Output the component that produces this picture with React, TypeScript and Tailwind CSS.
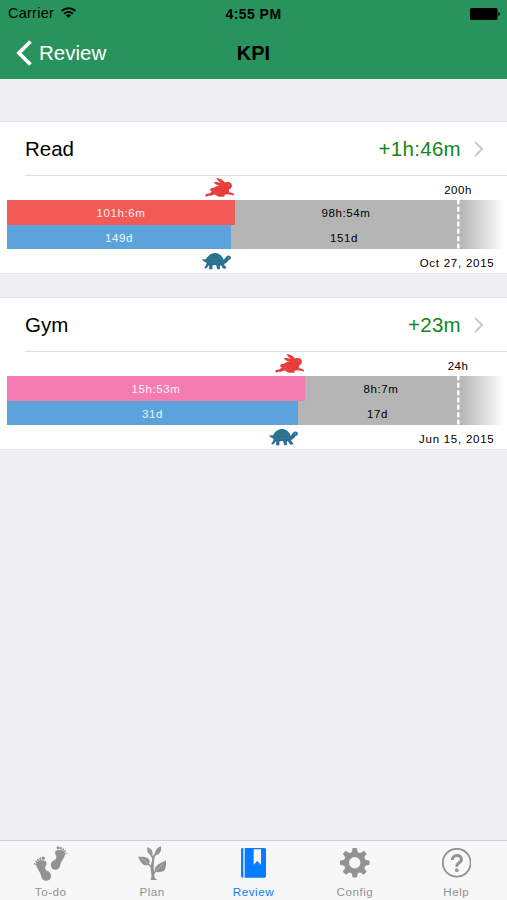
import type { ReactNode } from 'react'
import clsx from 'clsx'

type Goal = {
  name: string
  lead: string
  total: string
  due: string
  spent: { label: string; width: number; color: string }
  elapsed: { label: string; width: number }
  hoursLeft: string
  daysLeft: string
}

// Width of a chart from its left edge to the target line
const TARGET = 451

const goals: Goal[] = [
  {
    name: 'Read',
    lead: '+1h:46m',
    total: '200h',
    due: 'Oct 27, 2015',
    spent: { label: '101h:6m', width: 228, color: 'bg-[#f25a56]' },
    elapsed: { label: '149d', width: 224 },
    hoursLeft: '98h:54m',
    daysLeft: '151d',
  },
  {
    name: 'Gym',
    lead: '+23m',
    total: '24h',
    due: 'Jun 15, 2015',
    spent: { label: '15h:53m', width: 298, color: 'bg-[#f47cb0]' },
    elapsed: { label: '31d', width: 291 },
    hoursLeft: '8h:7m',
    daysLeft: '17d',
  },
]

function Rabbit() {
  return (
    <svg viewBox="0 0 88 57" className="h-[19px] w-[29.3px]" fill="#e63c3b">
      {/* ears */}
      <path d="M34 1C44 0 55 6 62 16L56 21C49 16 40 11 34 1Z" />
      <path d="M26 13C36 10 47 13 56 20L50 25C41 24 32 21 26 13Z" />
      {/* head and body */}
      <path d="M58 16C63 11 73 11 78 16C81 20 82 26 79 29C77 32 74 33 72 34C74 40 71 44 67 47C60 52 50 50 44 52C33 52 24 48 22 41C15 41 14 33 19 31C21 28 24 30 26 30C33 23 43 21 51 23Z" />
      {/* legs */}
      <path d="M23 38C20 42 15 46 9 47C5 47 1 48 1 52C1 56 5 57 9 53C17 54 23 52 31 47Z" />
      <path d="M63 42C70 43 77 43 82 45C87 47 88 50 88 52C84 53 80 50 76 50C69 50 62 49 57 48Z" />
      <path d="M35 48C43 47 50 49 57 50C61 52 60 56 55 56L43 56C38 55 34 53 32 50Z" />
      <circle cx="71" cy="21" r="1.8" fill="#fff" fillOpacity=".6" />
      <path d="M26 35C25 41 31 45 40 46" fill="none" stroke="#fff" strokeOpacity=".2" strokeWidth="1.5" />
    </svg>
  )
}

function Turtle() {
  return (
    <svg viewBox="0 0 87 50" className="h-[16.7px] w-[29px]" fill="#28718f">
      <path d="M0 20C6 18 9 19 12 19C18 7 28 0 39 0C51 0 60 8 65 20C69 18 70 12 75 9C81 6 87 9 87 15C86 20 81 20 79 22C76 29 71 32 66 33C67 36 69 39 73 43C74 48 66 48 63 46C60 42 59 38 56 37C53 38 53 40 54 45C55 50 47 50 45 47C44 43 44 39 42 37C38 36 34 36 31 38C31 42 33 46 30 49C26 50 20 49 21 44C22 40 22 38 21 37C18 39 17 44 13 46C8 47 6 45 8 42C12 38 13 34 14 30C10 27 5 25 0 20Z" />
      <path d="M14 26C29 31 49 31 64 25M30 4L28 14L38 20L51 15L48 4M28 14L19 20M51 15L60 20M38 20V28" fill="none" stroke="#fff" strokeOpacity=".13" strokeWidth="1.3" />
      <circle cx="79" cy="14" r="1.6" fill="#fff" fillOpacity=".6" />
    </svg>
  )
}

function Footprint() {
  return (
    <>
      <path d="M12 46C18 42 30 42 35 46C40 51 37 57 34 63C32 69 35 73 42 76C49 80 52 86 51 92C50 101 42 105 34 104C25 103 22 96 21 88C19 79 10 69 7 60C5 54 7 49 12 46Z" />
      <ellipse cx="28" cy="36.500" rx="5" ry="5" />
      <ellipse cx="19" cy="38.500" rx="3.2" ry="4.500" transform="rotate(-20 19 38.500)" />
      <ellipse cx="12" cy="42" rx="2.700" ry="4" transform="rotate(-30 12 42)" />
      <ellipse cx="6.500" cy="47" rx="2.300" ry="3.600" transform="rotate(-35 6.500 47)" />
      <ellipse cx="3" cy="54" rx="2" ry="3.300" transform="rotate(-35 3 54)" />
    </>
  )
}

function FeetIcon() {
  return (
    <svg viewBox="0 0 99 105" className="h-[35px] w-[33px]" fill="currentColor">
      <Footprint />
      <g transform="translate(99 -30) scale(-.95 .97)">
        <Footprint />
      </g>
    </svg>
  )
}

function PlantIcon() {
  return (
    <svg viewBox="0 0 85 104" className="h-[34.7px] w-[28.3px]" fill="currentColor">
      <path d="M37 104C41 96 41 88 39 77C37 64 40 49 46 26L51 27C48 47 46 60 48 74L49 91C50 97 54 101 62 104Z" />
      <path d="M43 67C38 61 33 56 28 51M46 85C50 77 55 73 62 68M46 38C42 31 39 27 37 23M48 31C51 27 54 23 57 19" fill="none" stroke="currentColor" strokeWidth="5" />
      <path d="M0 32C11 32 29 31 34 42C36 48 34 54 30 57C12 61 8 45 0 32Z" />
      <path d="M85 42C83 56 86 70 75 76C67 80 57 79 50 74C51 56 66 53 85 42Z" />
      <path d="M29 3C39 8 46 15 43 27C29 27 26 15 29 3Z" />
      <path d="M69 1C71 13 67 26 52 28C48 15 58 5 69 1Z" />
      <path d="M10 38C18 41 24 45 28 53M75 53C69 61 64 66 55 72" fill="none" stroke="#f7f7f7" strokeOpacity=".6" strokeWidth="2" />
      <path d="M33 10L38 22M64 8L56 22" fill="none" stroke="#f7f7f7" strokeOpacity=".35" strokeWidth="1.500" />
    </svg>
  )
}

function BookIcon() {
  return (
    <svg viewBox="0 0 75 89" className="h-[29.7px] w-[25px]" fill="currentColor">
      <path d="M4 0H7V89H4C1 88 0 86 0 83V6C0 3 1 1 4 0ZM11 0H70C73 0 75 2 75 5V84C75 87 73 89 70 89H11Z" />
      <path d="M38 4H60V50L49 39L38 50Z" fill="#f7f7f7" />
    </svg>
  )
}

const teeth = [0, 45, 90, 135, 180, 225, 270, 315]

function GearIcon() {
  return (
    <svg viewBox="-44 -44 88 88" className="size-[29.5px]" fill="currentColor">
      {teeth.map((angle) => (
        <path key={angle} d="M-13 -27L-8 -34L-7 -42Q-6 -44 -4 -44H4Q6 -44 7 -42L8 -34L13 -27Z" transform={`rotate(${angle})`} />
      ))}
      <circle r="24.500" fill="none" stroke="currentColor" strokeWidth="15" />
    </svg>
  )
}

function HelpIcon() {
  return (
    <svg viewBox="0 0 88 88" className="size-[29.5px]" fill="none" stroke="currentColor">
      <circle cx="44" cy="44" r="41.500" strokeWidth="5.500" />
      <path d="M31 36C31 18 58 18 58 34C58 44 44 43 44 56" strokeWidth="9" />
      <circle cx="44" cy="66" r="5.500" fill="currentColor" stroke="none" />
    </svg>
  )
}

function BarLabel({ children, className }: { children: ReactNode; className?: string }) {
  return (
    <div className={clsx('flex h-full shrink-0 items-center justify-center pt-[3px] text-[11.5px] tracking-[0.6px]', className)}>
      {children}
    </div>
  )
}

function GoalCard({ goal }: { goal: Goal }) {
  const { spent, elapsed } = goal

  return (
    <section className="h-[151px] bg-white shadow-[0_0_0_1px_#e4e4e8]">
      {/* Title row */}
      <div className="ml-[25px] flex h-[54px] items-center border-b border-[#dedee2] pt-[2px] pr-[24px]">
        <h2 className="text-[20.5px]">{goal.name}</h2>
        <span className="ml-auto text-[20.5px] tracking-[0.3px] text-[#128a12]">{goal.lead}</span>
        <svg viewBox="0 0 9 16" className="mb-[2px] ml-[13px] h-4 w-[9px]" fill="none" stroke="#c7c7cc" strokeWidth="2">
          <path d="M1 1L8 8L1 15" />
        </svg>
      </div>

      {/* Rabbit runs at the end of the hours bar */}
      <div className="ml-[7px] flex h-[24px] items-start pt-[2px]">
        <div className="flex shrink-0 justify-end pr-px" style={{ width: spent.width }}>
          <Rabbit />
        </div>
        <span className="mt-[4px] flex-1 text-[11.5px] leading-[16px] tracking-[0.5px]">
          <span className="block text-center" style={{ marginLeft: TARGET - spent.width - 40, width: 80 }}>
            {goal.total}
          </span>
        </span>
      </div>

      {/* Progress bars */}
      <div className="ml-[7px] flex h-[49px]">
        <div className="shrink-0 bg-[#b5b5b5]" style={{ width: TARGET - 1 }}>
          <div className="flex h-[24.5px]">
            <div className={clsx('text-white/90', spent.color)} style={{ width: spent.width }}>
              <BarLabel>{spent.label}</BarLabel>
            </div>
            <BarLabel className="flex-1">{goal.hoursLeft}</BarLabel>
          </div>
          <div className="flex h-[24.5px]">
            <div className="bg-[#5ba3da] text-white/90" style={{ width: elapsed.width }}>
              <BarLabel>{elapsed.label}</BarLabel>
            </div>
            <BarLabel className="flex-1">{goal.daysLeft}</BarLabel>
          </div>
        </div>
        <svg viewBox="0 0 3 49" className="h-[49px] w-[3px] shrink-0 bg-[#b5b5b5]">
          <path d="M1.300 0V49" stroke="#fff" strokeWidth="2.500" strokeDasharray="5 2.330" strokeDashoffset="0.500" />
        </svg>
        <div className="flex-1 bg-linear-to-r from-[#b5b5b5] to-white to-95%" />
      </div>

      {/* Turtle walks at the end of the days bar */}
      <div className="ml-[7px] flex items-start pt-[4px] pr-[12.5px]">
        <div className="flex shrink-0 justify-end" style={{ width: elapsed.width }}>
          <Turtle />
        </div>
        <span className="mt-[2px] ml-auto text-[11.5px] leading-[16px] tracking-[0.75px]">{goal.due}</span>
      </div>
    </section>
  )
}

const tabs = [
  { label: 'To-do', icon: <FeetIcon /> },
  { label: 'Plan', icon: <PlantIcon /> },
  { label: 'Review', icon: <BookIcon />, active: true },
  { label: 'Config', icon: <GearIcon /> },
  { label: 'Help', icon: <HelpIcon /> },
]

export default function App() {
  return (
    <div className="flex h-[900px] w-[507px] flex-col overflow-hidden bg-[#efeff4] font-['Liberation_Sans',Arial,sans-serif] text-black">
      <header className="h-[79px] shrink-0 bg-[#28935d]">
        {/* Status bar */}
        <div className="grid h-[27px] grid-cols-3 items-center px-[8px] text-[14.5px]">
          <div className="flex items-center gap-[7px]">
            <span className="mt-px tracking-[0.25px]">Carrier</span>
            <svg viewBox="0 0 15 11" className="mb-[3px] h-[11px] w-[15px]" fill="none" stroke="#000" strokeWidth="2">
              <path d="M.7 4C4.500 .3 10.500 .3 14.300 4M3.200 6.700C5.700 4.300 9.300 4.300 11.800 6.700" />
              <path d="M4.900 8.400Q7.500 6.300 10.100 8.400L7.500 11Z" fill="#000" stroke="none" />
            </svg>
          </div>
          <span className="mt-px text-center text-[14px] font-bold tracking-[0.45px]">4:55 PM</span>
          <svg viewBox="0 0 30 12" className="mr-[-1px] h-[12px] w-[30px] justify-self-end">
            <rect width="27.500" height="12" rx="1.500" />
            <path d="M28.300 4Q30 4.500 30 6T28.300 8Z" />
          </svg>
        </div>

        {/* Navigation bar */}
        <nav className="grid h-[51px] grid-cols-3 items-center">
          <button className="ml-[16px] flex items-center gap-[7px] text-[20.5px] text-white">
            <svg viewBox="0 0 16 26" className="h-[26px] w-[16px]" fill="none" stroke="#fff" strokeWidth="3.800">
              <path d="M14.500 1.500L3 13L14.500 24.500" />
            </svg>
            <span className="mt-px">Review</span>
          </button>
          <h1 className="mt-px text-center text-[20px] font-bold">KPI</h1>
        </nav>
      </header>

      <main className="flex flex-1 flex-col gap-[25px] pt-[43px]">
        {goals.map((goal) => (
          <GoalCard key={goal.name} goal={goal} />
        ))}
      </main>

      <footer className="grid h-[60px] shrink-0 grid-cols-5 border-t border-[#cfcfd2] bg-[#f7f7f7]">
        {tabs.map(({ label, icon, active }) => (
          <button
            key={label}
            className={clsx('flex flex-col items-center', active ? 'text-[#087cfe]' : 'text-[#929292]')}
          >
            <span className="flex h-[44px] items-center">{icon}</span>
            <span className="text-[11.7px] leading-[14px] tracking-[0.5px]">{label}</span>
          </button>
        ))}
      </footer>
    </div>
  )
}
